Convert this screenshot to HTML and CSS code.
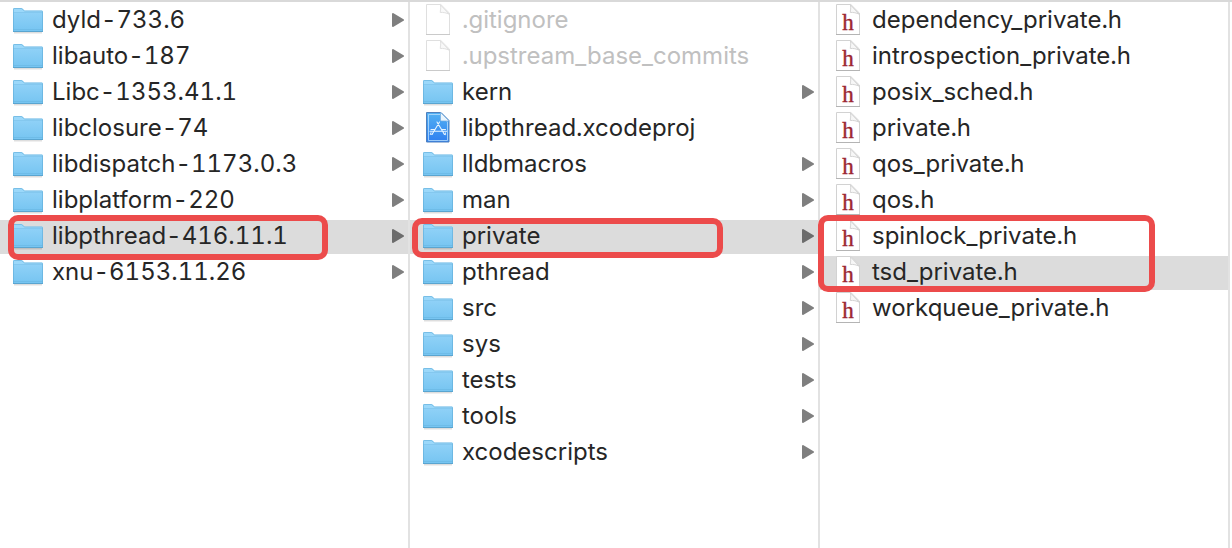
FILE: index.html
```html
<!DOCTYPE html>
<html lang="en">
<head>
<meta charset="utf-8">
<title>Finder</title>
<link rel="stylesheet" href="styles.css">
</head>
<body>
<svg class="defs" width="0" height="0" aria-hidden="true">
  <defs>
    <linearGradient id="folderFill" x1="0" y1="0" x2="0" y2="1">
      <stop offset="0" stop-color="#8fd1f7"/><stop offset="1" stop-color="#75c4f1"/>
    </linearGradient>
    <linearGradient id="projFill" x1="0" y1="0" x2="0" y2="1">
      <stop offset="0" stop-color="#53b2f3"/><stop offset="1" stop-color="#2f7ff0"/>
    </linearGradient>
    <symbol id="folder" viewBox="0 0 30 34">
      <path d="M1 30h28v1.5H1z" fill="#000" opacity=".13"/>
      <path d="M0 30V7.300Q0 6 1.300 6H8q1.200 0 1.900.8l1 1.200q.5.500 1.300.5h16.500Q30 8.500 30 9.800V30z" fill="#9bd8fa"/>
      <path d="M0 10.500h30V30H0z" fill="url(#folderFill)"/>
      <path d="M.5 10.500h29" stroke="#6bb7e2" opacity=".4"/>
      <path d="M.5 27.500h29" stroke="#66b4e0" opacity=".5"/>
      <path d="M.5 29.500V7.300q0-.8.800-.8H8q1 0 1.500.6l1 1.200q.6.700 1.700.7h16.500q.8 0 .8.800v19.700z" fill="none" stroke="#5ba9d6" opacity=".55"/>
      <path d="M0 29.500h30" stroke="#5aa5d0"/>
    </symbol>
    <symbol id="page" viewBox="0 0 30 34">
      <path d="M3.500 2.500h14.300l8.700 8.700v21.300h-23z" fill="#fff" stroke="#d2d2d2"/>
      <path d="M3 32.500h24" stroke="#b4b4b4"/>
      <path d="M17.500 3c.6 3-.2 5.500-.2 7.500 3-.3 6 .2 9 1.800L17.500 3z" fill="#f7f7f7" stroke="#d4d4d4"/>
    </symbol>
    <symbol id="header" viewBox="0 0 30 34">
      <use href="#page" width="30" height="34"/>
      <text class="glyph" x="15" y="28" text-anchor="middle">h</text>
    </symbol>
    <symbol id="project" viewBox="0 0 30 34">
      <path d="M3.500 1.500h14.500l8 8v21.500H3.500z" transform="translate(0 1)" fill="url(#projFill)" stroke="#4f80bd"/>
      <path d="M5.500 4.500h11.500l7.500 7.500v18.500h-19z" fill="none" stroke="#b9defc" opacity=".8"/>
      <path d="M17.500 2.500v7.500q0 1 1 1h7.500z" fill="#eaf5fd" stroke="#72aadc" stroke-width=".7"/>
      <g fill="none" stroke="#e6f4ff" stroke-width="1.100" stroke-linecap="round">
        <path d="M14 12l7.500 12.500M16.500 12L9 24.500M7 21.300h16.500M8 19.500h4M18.500 19.500h4"/>
        <path d="M8 22.500l-.8 2 2-.5M21 24l1.600.8-.2-2" stroke-width=".9"/>
      </g>
    </symbol>
    <symbol id="arrow" viewBox="0 0 12 14">
      <path d="M1 1l10 6-10 6z" fill="currentColor" stroke="currentColor" stroke-width="2" stroke-linejoin="round"/>
    </symbol>
  </defs>
</svg>
<main class="browser">
  <ul class="column">
    <li class="row"><svg class="icon"><use href="#folder"/></svg><span class="name">dyld-733.6</span><svg class="arrow"><use href="#arrow"/></svg></li>
    <li class="row"><svg class="icon"><use href="#folder"/></svg><span class="name">libauto-187</span><svg class="arrow"><use href="#arrow"/></svg></li>
    <li class="row"><svg class="icon"><use href="#folder"/></svg><span class="name">Libc-1353.41.1</span><svg class="arrow"><use href="#arrow"/></svg></li>
    <li class="row"><svg class="icon"><use href="#folder"/></svg><span class="name">libclosure-74</span><svg class="arrow"><use href="#arrow"/></svg></li>
    <li class="row"><svg class="icon"><use href="#folder"/></svg><span class="name">libdispatch-1173.0.3</span><svg class="arrow"><use href="#arrow"/></svg></li>
    <li class="row"><svg class="icon"><use href="#folder"/></svg><span class="name">libplatform-220</span><svg class="arrow"><use href="#arrow"/></svg></li>
    <li class="row selected"><svg class="icon"><use href="#folder"/></svg><span class="name">libpthread-416.11.1</span><svg class="arrow"><use href="#arrow"/></svg><span class="mark mark-library"></span></li>
    <li class="row"><svg class="icon"><use href="#folder"/></svg><span class="name">xnu-6153.11.26</span><svg class="arrow"><use href="#arrow"/></svg></li>
  </ul>
  <ul class="column">
    <li class="row dimmed"><svg class="icon"><use href="#page"/></svg><span class="name">.gitignore</span></li>
    <li class="row dimmed"><svg class="icon"><use href="#page"/></svg><span class="name">.upstream_base_commits</span></li>
    <li class="row"><svg class="icon"><use href="#folder"/></svg><span class="name">kern</span><svg class="arrow"><use href="#arrow"/></svg></li>
    <li class="row"><svg class="icon"><use href="#project"/></svg><span class="name">libpthread.xcodeproj</span></li>
    <li class="row"><svg class="icon"><use href="#folder"/></svg><span class="name">lldbmacros</span><svg class="arrow"><use href="#arrow"/></svg></li>
    <li class="row"><svg class="icon"><use href="#folder"/></svg><span class="name">man</span><svg class="arrow"><use href="#arrow"/></svg></li>
    <li class="row selected"><svg class="icon"><use href="#folder"/></svg><span class="name">private</span><svg class="arrow"><use href="#arrow"/></svg><span class="mark mark-folder"></span></li>
    <li class="row"><svg class="icon"><use href="#folder"/></svg><span class="name">pthread</span><svg class="arrow"><use href="#arrow"/></svg></li>
    <li class="row"><svg class="icon"><use href="#folder"/></svg><span class="name">src</span><svg class="arrow"><use href="#arrow"/></svg></li>
    <li class="row"><svg class="icon"><use href="#folder"/></svg><span class="name">sys</span><svg class="arrow"><use href="#arrow"/></svg></li>
    <li class="row"><svg class="icon"><use href="#folder"/></svg><span class="name">tests</span><svg class="arrow"><use href="#arrow"/></svg></li>
    <li class="row"><svg class="icon"><use href="#folder"/></svg><span class="name">tools</span><svg class="arrow"><use href="#arrow"/></svg></li>
    <li class="row"><svg class="icon"><use href="#folder"/></svg><span class="name">xcodescripts</span><svg class="arrow"><use href="#arrow"/></svg></li>
  </ul>
  <ul class="column">
    <li class="row"><svg class="icon"><use href="#header"/></svg><span class="name">dependency_private.h</span></li>
    <li class="row"><svg class="icon"><use href="#header"/></svg><span class="name">introspection_private.h</span></li>
    <li class="row"><svg class="icon"><use href="#header"/></svg><span class="name">posix_sched.h</span></li>
    <li class="row"><svg class="icon"><use href="#header"/></svg><span class="name">private.h</span></li>
    <li class="row"><svg class="icon"><use href="#header"/></svg><span class="name">qos_private.h</span></li>
    <li class="row"><svg class="icon"><use href="#header"/></svg><span class="name">qos.h</span></li>
    <li class="row"><svg class="icon"><use href="#header"/></svg><span class="name">spinlock_private.h</span><span class="mark mark-headers"></span></li>
    <li class="row selected"><svg class="icon"><use href="#header"/></svg><span class="name">tsd_private.h</span></li>
    <li class="row"><svg class="icon"><use href="#header"/></svg><span class="name">workqueue_private.h</span></li>
  </ul>
</main>
</body>
</html>
```
FILE: styles.css
```css
* {
  box-sizing: border-box;
}

body {
  margin: 0;
  background: #fff;
  color: #262626;
  font-family: Inter, "Liberation Sans", sans-serif;
  font-size: 24px;
  font-variant-numeric: tabular-nums;
}

.defs {
  position: absolute;
}

.browser {
  display: grid;
  grid-template-columns: repeat(3, minmax(0, 1fr));
  min-height: 100vh;
  padding-right: 2px;
  border-top: 2px solid #d9d9d9;
}

.column {
  display: flex;
  flex-direction: column;
  gap: 2px;
  margin: 0;
  padding: 2px 0;
  border-right: 2px solid #e2e2e2;
  list-style: none;
}

.row {
  position: relative;
  display: flex;
  align-items: center;
  gap: 9px;
  height: 34px;
  padding: 0 4px 0 13px;
}

.selected {
  background: #dcdcdc;
}

.icon {
  flex: none;
  width: 30px;
  height: 34px;
  margin-bottom: 4px;
}

.name {
  flex: 1;
  min-width: 0;
  padding-bottom: 3px;
  line-height: 30px;
  white-space: nowrap;
}

.arrow {
  flex: none;
  width: 12px;
  height: 14px;
  margin-bottom: 2px;
  color: #7f7f7f;
}

.selected .arrow {
  color: #6c6c6c;
}

.dimmed .name {
  color: #c0c0c0;
}

.dimmed .icon {
  opacity: 0.7;
}

.glyph {
  fill: #9c2632;
  stroke: #9c2632;
  stroke-width: 0.4px;
  font-family: "Liberation Serif", serif;
  font-size: 23px;
}

.mark {
  position: absolute;
  z-index: 1;
  border: 6px solid #ec4b4b;
  border-radius: 10px;
  pointer-events: none;
}

.mark-library {
  top: -5px;
  left: 8px;
  width: 320px;
  height: 45px;
}

.mark-folder {
  top: -2px;
  left: 2px;
  width: 311px;
  height: 40px;
}

.mark-headers {
  top: -5px;
  left: -2px;
  width: 337px;
  height: 77px;
}
```
